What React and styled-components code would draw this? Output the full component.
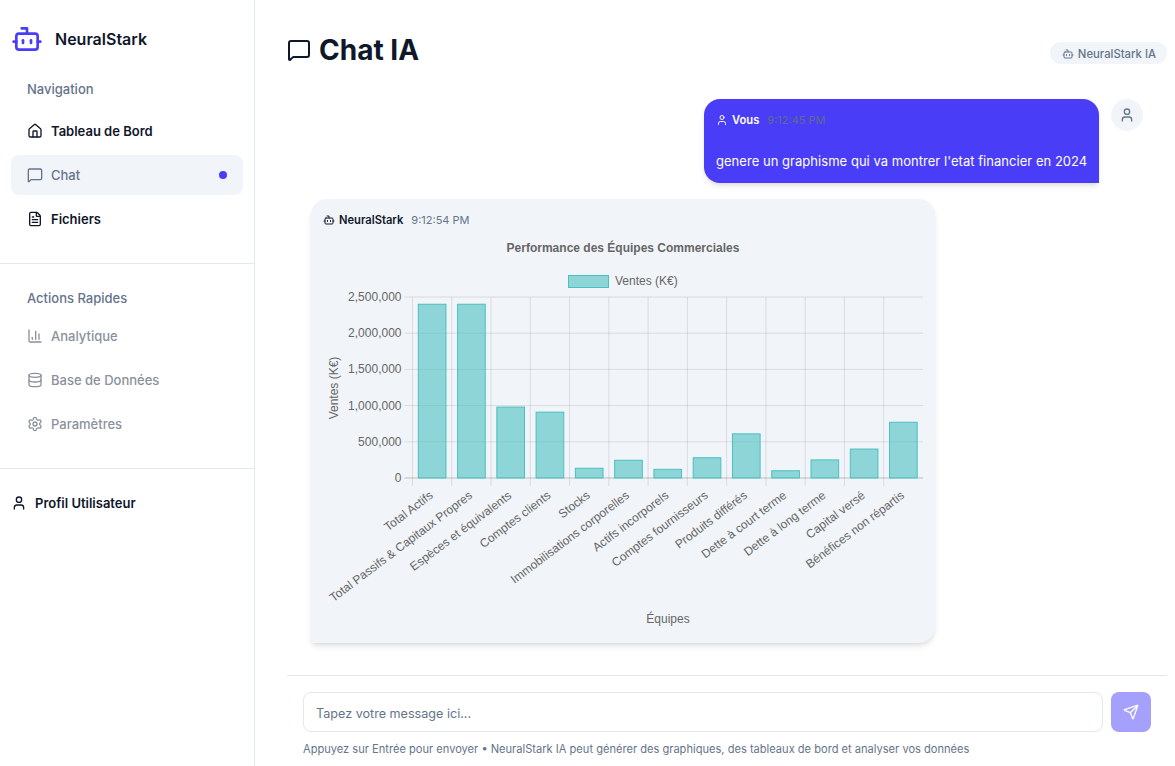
import React from 'react'
import styled, { createGlobalStyle } from 'styled-components'
import { Bot, House, MessageSquare, FileText, ChartColumn, Database, Settings, User, Send } from 'lucide-react'

const GlobalStyle = createGlobalStyle`
    html, body {
        margin: 0;
        height: 100%;
        overflow: hidden;
        background: #fff;
    }
    body {
        font-family: Inter, "Liberation Sans", sans-serif;
        color: #0f172a;
    }
`

const Page = styled.div`
    display: flex;
    height: 766px;
`

const Sidebar = styled.aside`
    width: 254px;
    flex-shrink: 0;
    border-right: 1px solid #e2e8f0;
    box-sizing: content-box;
`

const Brand = styled.div`
    display: flex;
    align-items: center;
    gap: 12px;
    height: 32px;
    padding: 23px 11px 0;
    font-size: 16px;
    font-weight: 600;
    color: #4a3df7;

    span {
        color: #0f172a;
    }
`

const Section = styled.div`
    box-sizing: border-box;
    padding: 24px 11px 0;
    height: ${p => p.$height}px;
    border-bottom: 1px solid #e2e8f0;
`

const SectionLabel = styled.div`
    padding-left: 16px;
    height: 20px;
    line-height: 20px;
    margin-bottom: ${p => p.$gap}px;
    font-size: 13px;
    font-weight: 500;
    color: #64748b;
`

const NavItem = styled.div`
    display: flex;
    align-items: center;
    gap: 8px;
    height: 40px;
    padding: 0 16px;
    margin-bottom: 4px;
    border-radius: 8px;
    font-size: 13px;
    font-weight: ${p => (p.$active || p.$muted ? 500 : 600)};
    box-sizing: border-box;
    color: ${p => (p.$active ? '#64748b' : p.$muted ? '#8b919c' : '#0f172a')};
    background: ${p => (p.$active ? '#f1f5f9' : 'transparent')};

    svg {
        flex-shrink: 0;
    }
`

const ActiveDot = styled.i`
    width: 8px;
    height: 8px;
    margin-left: auto;
    border-radius: 50%;
    background: #4a3df7;
`

const Profile = styled.div`
    display: flex;
    align-items: center;
    gap: 8px;
    padding: 24px 11px 0;
    font-size: 13px;
    font-weight: 600;
    line-height: 20px;
`

const Main = styled.main`
    flex: 1;
    min-width: 0;
    display: flex;
    flex-direction: column;
    padding: 0 8px 0 32px;
`

const Header = styled.header`
    height: 99px;
    flex-shrink: 0;
    display: flex;
    align-items: flex-start;
    justify-content: space-between;
`

const Title = styled.h1`
    display: flex;
    align-items: center;
    gap: 8px;
    margin: 33px 0 0;
    font-size: 28px;
    line-height: 34px;
    font-weight: 700;
`

const Chip = styled.div`
    display: flex;
    align-items: center;
    gap: 4px;
    height: 22px;
    box-sizing: border-box;
    margin-top: 42px;
    padding: 1px 11px 0 12px;
    border-radius: 11px;
    background: #f1f5f9;
    color: #64748b;
    font-size: 11.3px;
    font-weight: 500;
`

const Messages = styled.div`
    flex: 1;
    display: flex;
    flex-direction: column;
    gap: 16px;
`

const UserRow = styled.div`
    display: flex;
    justify-content: flex-end;
    gap: 12px;
    padding-right: 24px;
`

const Bubble = styled.div`
    width: 395px;
    height: 84px;
    box-sizing: border-box;
    padding: 13px 12px 0;
    border-radius: 16px 16px 0 16px;
    background: #4a3df7;
    color: #fff;
    box-shadow: 0 4px 6px -1px rgba(0, 0, 0, 0.1), 0 2px 4px -2px rgba(0, 0, 0, 0.1);
`

const MetaRow = styled.div`
    display: flex;
    align-items: center;
    gap: 4px;
    height: 16px;
    font-size: 11.2px;
    font-weight: 600;
    line-height: 16px;
    color: ${p => p.$color};
`

const Time = styled.span`
    margin-left: 4px;
    font-size: 11px;
    font-weight: 400;
    color: ${p => p.$color};
`

const BubbleText = styled.div`
    margin-top: 23px;
    font-size: 13px;
    letter-spacing: 0.035px;
    line-height: 20px;
    white-space: nowrap;
`

const Avatar = styled.div`
    width: 32px;
    height: 32px;
    border-radius: 50%;
    background: #f1f5f9;
    color: #64748b;
    display: flex;
    align-items: center;
    justify-content: center;
`

const ChartCard = styled.div`
    width: 624px;
    height: 444px;
    margin-left: 24px;
    box-sizing: border-box;
    padding: 13px 12px 0;
    border-radius: 16px 16px 16px 0;
    background: #f1f5f9;
    box-shadow: 0 4px 6px -1px rgba(0, 0, 0, 0.1), 0 2px 4px -2px rgba(0, 0, 0, 0.1);
`

const ChartSvg = styled.svg`
    display: block;
    width: 600px;
    height: 414px;
    margin-top: 1px;
    font-family: "Liberation Sans", Arial, sans-serif;
    font-size: 12px;
    fill: #666;
`

const Composer = styled.footer`
    flex-shrink: 0;
    height: 91px;
    box-sizing: border-box;
    border-top: 1px solid #e2e8f0;
    padding: 16px 16px 0;
`

const InputRow = styled.div`
    display: flex;
    gap: 8px;
`

const Input = styled.input`
    flex: 1;
    height: 40px;
    box-sizing: border-box;
    padding: 2px 12px 0;
    border: 1px solid #e2e8f0;
    border-radius: 8px;
    background: #fff;
    font-family: inherit;
    font-size: 12.6px;
    color: #0f172a;

    &::placeholder {
        color: #64748b;
        opacity: 1;
    }
`

const SendButton = styled.button`
    width: 40px;
    height: 40px;
    border: 0;
    padding: 0;
    border-radius: 8px;
    background: #a5a0fb;
    color: #fff;
    display: flex;
    align-items: center;
    justify-content: center;
`

const Hint = styled.p`
    margin: 9px 0 0;
    font-size: 11.1px;
    line-height: 16px;
    color: #64748b;
    white-space: nowrap;
`

// page coordinates: the svg viewBox starts where the svg sits in the page
const bars = [
  ['Total Actifs', 2400000],
  ['Total Passifs & Capitaux Propres', 2400000],
  ['Espèces et équivalents', 980000],
  ['Comptes clients', 910000],
  ['Stocks', 135000],
  ['Immobilisations corporelles', 245000],
  ['Actifs incorporels', 120000],
  ['Comptes fournisseurs', 280000],
  ['Produits différés', 610000],
  ['Dette à court terme', 100000],
  ['Dette à long terme', 250000],
  ['Capital versé', 400000],
  ['Bénéfices non répartis', 770000],
]
const ticks = [0, 500000, 1000000, 1500000, 2000000, 2500000]
const left = 412.5
const right = 923
const top = 297
const bottom = 478
const step = (right - left) / bars.length
const yFor = v => bottom - (v / 2500000) * (bottom - top)

const BarChart = () => (
  <ChartSvg viewBox="323 229 600 414">
    <text x="623" y="252" textAnchor="middle" fontWeight="700" fill="#666">Performance des Équipes Commerciales</text>
    <rect x="568.5" y="275.5" width="40" height="12" fill="rgba(75,192,192,0.6)" stroke="rgb(75,192,192)" />
    <text x="615" y="285">Ventes (K€)</text>

    {ticks.map(t => (
      <g key={t}>
        <line x1={left - 8} x2={right} y1={yFor(t)} y2={yFor(t)} stroke={t === 0 ? 'rgba(0,0,0,0.22)' : 'rgba(0,0,0,0.1)'} />
        <text x={left - 11} y={yFor(t) + 4} textAnchor="end">{t.toLocaleString('en-US')}</text>
      </g>
    ))}
    {bars.map((b, i) => (
      <line key={b[0]} x1={left + i * step} x2={left + i * step} y1={top} y2={bottom + 8} stroke="rgba(0,0,0,0.1)" />
    ))}

    {bars.map((b, i) => (
      <rect
        key={b[0]}
        x={left + i * step + 5.8}
        y={yFor(b[1])}
        width={step - 11.6}
        height={bottom - yFor(b[1])}
        fill="rgba(75,192,192,0.6)"
        stroke="rgb(75,192,192)"
      />
    ))}

    {bars.map((b, i) => {
      const x = left + i * step + step / 2 + 1.7
      return (
        <text key={b[0]} x={x} y={497} textAnchor="end" transform={`rotate(-37 ${x} 497)`}>{b[0]}</text>
      )
    })}

    <text transform="translate(338 388) rotate(-90)" textAnchor="middle">Ventes (K€)</text>
    <text x="668" y="623" textAnchor="middle">Équipes</text>
  </ChartSvg>
)

const App = () => {
  return (
    <Page>
      <GlobalStyle />
      <Sidebar>
        <Brand>
          <Bot size={32} strokeWidth={2} />
          <span>NeuralStark</span>
        </Brand>
        <Section $height={209}>
          <SectionLabel $gap={12}>Navigation</SectionLabel>
          <NavItem><House size={16} />Tableau de Bord</NavItem>
          <NavItem $active><MessageSquare size={16} />Chat<ActiveDot /></NavItem>
          <NavItem><FileText size={16} />Fichiers</NavItem>
        </Section>
        <Section $height={205}>
          <SectionLabel $gap={8}>Actions Rapides</SectionLabel>
          <NavItem $muted><ChartColumn size={16} />Analytique</NavItem>
          <NavItem $muted><Database size={16} />Base de Données</NavItem>
          <NavItem $muted><Settings size={16} />Paramètres</NavItem>
        </Section>
        <Profile><User size={16} />Profil Utilisateur</Profile>
      </Sidebar>
      <Main>
        <Header>
          <Title><MessageSquare size={24} />Chat IA</Title>
          <Chip><Bot size={12} />NeuralStark IA</Chip>
        </Header>
        <Messages>
          <UserRow>
            <Bubble>
              <MetaRow $color="#fff">
                <User size={12} />Vous<Time $color="#64698f">9:12:45 PM</Time>
              </MetaRow>
              <BubbleText>genere un graphisme qui va montrer l'etat financier en 2024</BubbleText>
            </Bubble>
            <Avatar><User size={16} /></Avatar>
          </UserRow>
          <ChartCard>
            <MetaRow $color="#0f172a">
              <Bot size={12} />NeuralStark<Time $color="#64748b">9:12:54 PM</Time>
            </MetaRow>
            <BarChart />
          </ChartCard>
        </Messages>
        <Composer>
          <InputRow>
            <Input placeholder="Tapez votre message ici..." />
            <SendButton><Send size={16} /></SendButton>
          </InputRow>
          <Hint>Appuyez sur Entrée pour envoyer • NeuralStark IA peut générer des graphiques, des tableaux de bord et analyser vos données</Hint>
        </Composer>
      </Main>
    </Page>
  )
}

export default App
